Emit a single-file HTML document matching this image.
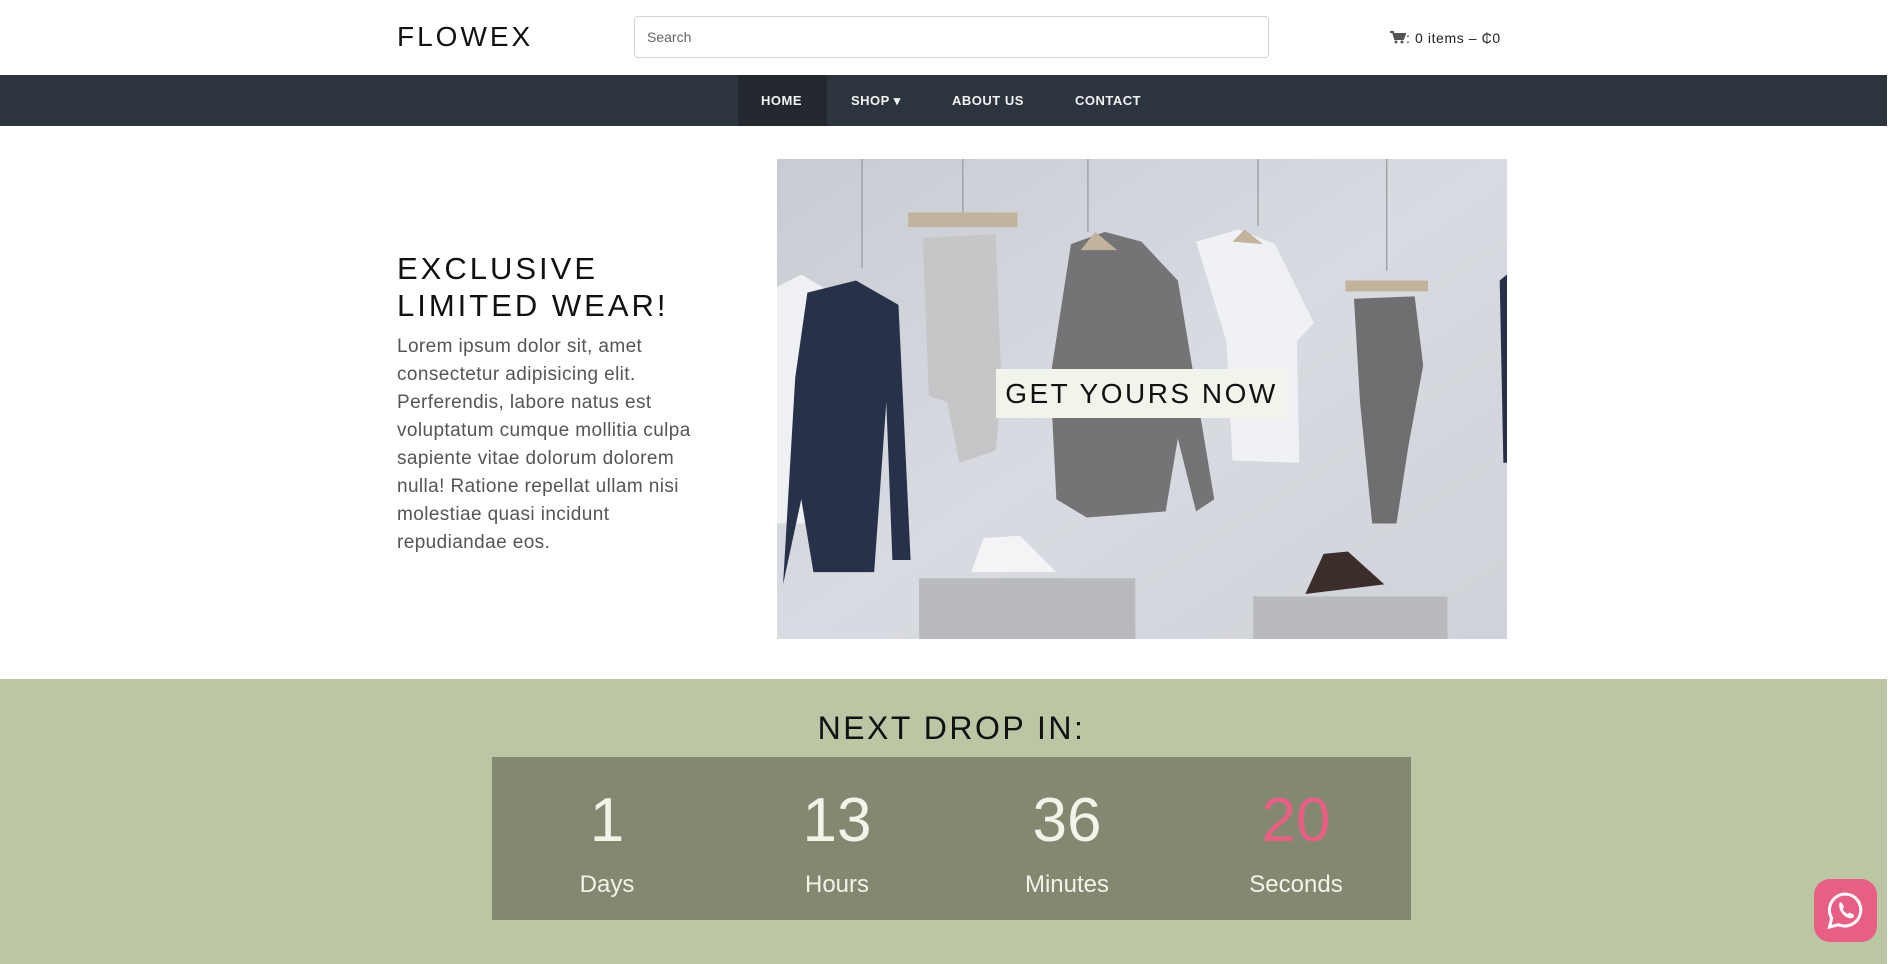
<!DOCTYPE html>
<html><head><meta charset="utf-8"><style>
*{box-sizing:border-box;margin:0;padding:0}
body{width:1904px;height:964px;overflow:hidden;background:#fff;font-family:"Liberation Sans",sans-serif;position:relative}
.page{width:1887px;position:absolute;left:0;top:0;height:964px}
.hdr{height:75px;position:relative}
.logo{position:absolute;left:397px;top:21px;font-size:28px;letter-spacing:3px;color:#111}
.search{position:absolute;left:634px;top:16px;width:635px;height:42px;border:1px solid #d4d4d4;border-radius:4px;font-size:14px;color:#666;padding:12px 12px}
.cart{position:absolute;left:1390px;top:30px;font-size:14px;color:#222;letter-spacing:.6px}
.nav{position:absolute;top:75px;left:0;width:1887px;height:51px;background:#2c353e}
.nav span{position:absolute;top:18px;color:#f2f2f2;font-size:13px;font-weight:bold;letter-spacing:.5px}
.home{position:absolute;left:738px;top:0;width:89px;height:51px;background:#22282e}
h1{position:absolute;left:397px;top:250px;font-weight:normal;font-size:31px;letter-spacing:3px;line-height:37px;color:#111}
.p{position:absolute;left:397px;top:333px;width:326px;font-size:19px;line-height:28px;color:#555;letter-spacing:.4px}
.img{position:absolute;left:777px;top:159px;width:730px;height:480px}
.btn{position:absolute;left:996px;top:369px;width:291px;height:49px;background:#f1f4ea;font-size:28px;letter-spacing:2.5px;color:#111;text-align:center;line-height:49px}
.green{position:absolute;top:679px;left:0;width:1887px;height:285px;background:#bac6a4}
.ndi{position:absolute;top:710px;left:8px;width:1887px;text-align:center;font-size:32px;letter-spacing:2.5px;color:#111}
.box{position:absolute;left:492px;top:757px;width:919px;height:163px;background:#828970}
.col{position:absolute;top:0;width:230px;text-align:center;color:#f3f3ea}
.num{position:absolute;top:28px;width:230px;font-size:62px}
.lab{position:absolute;top:114px;width:230px;font-size:24px}
.wa{position:absolute;left:1814px;top:879px;width:63px;height:63px;background:#e95f84;border-radius:16px}
</style></head><body><div class="page">
<div class="hdr">
<div class="logo">FLOWEX</div>
<div class="search">Search</div>
<div class="cart"><svg width="16" height="13" viewBox="0 0 16 13" style="vertical-align:-1px"><path d="M0 1h3l2 7h8l2-5H4" fill="none" stroke="#555" stroke-width="2"/><path d="M4 3h11l-2 5H5z" fill="#555"/><circle cx="6" cy="11" r="1.5" fill="#555"/><circle cx="12" cy="11" r="1.5" fill="#555"/></svg>: 0 items – ₵0</div>
</div>
<div class="nav"><div class="home"></div>
<span style="left:761px">HOME</span><span style="left:851px">SHOP ▾</span><span style="left:952px">ABOUT US</span><span style="left:1075px">CONTACT</span></div>
<h1>EXCLUSIVE<br>LIMITED WEAR!</h1>
<div class="p">Lorem ipsum dolor sit, amet consectetur adipisicing elit. Perferendis, labore natus est voluptatum cumque mollitia culpa sapiente vitae dolorum dolorem nulla! Ratione repellat ullam nisi molestiae quasi incidunt repudiandae eos.</div>
<svg class="img" viewBox="0 0 601 395" preserveAspectRatio="none">
<defs><linearGradient id="g" x1="0" y1="0" x2="1" y2="1"><stop offset="0" stop-color="#c9cbd3"/><stop offset=".5" stop-color="#d9dbe2"/><stop offset="1" stop-color="#d0d2d9"/></linearGradient></defs>
<rect width="601" height="395" fill="url(#g)"/>
<g stroke="#999" stroke-width="1"><line x1="70" y1="0" x2="70" y2="90"/><line x1="153" y1="0" x2="153" y2="45"/><line x1="256" y1="0" x2="256" y2="60"/><line x1="396" y1="0" x2="396" y2="55"/><line x1="502" y1="0" x2="502" y2="92"/></g>
<path d="M0 105 L20 95 L45 110 L45 300 L0 300Z" fill="#eef0f3"/>
<path d="M25 110 L65 100 L100 120 L110 330 L95 330 L90 200 L80 340 L30 340 L20 280 L5 350 L15 180Z" fill="#27324a"/>
<rect x="108" y="44" width="90" height="12" fill="#c2b39c"/>
<path d="M120 65 L180 62 L185 190 L180 240 L150 250 L140 200 L125 195Z" fill="#c6c6c8"/>
<path d="M242 70 L270 60 L300 68 L330 100 L360 280 L345 290 L330 230 L320 290 L255 295 L230 280 L225 180Z" fill="#747476"/>
<path d="M345 68 L380 58 L410 70 L442 135 L428 150 L430 250 L375 248 L370 150Z" fill="#eff1f5"/>
<path d="M262 60 L250 75 L280 75Z" fill="#c2b39c"/>
<path d="M385 58 L375 68 L400 70Z" fill="#c2b39c"/>
<rect x="468" y="100" width="68" height="9" fill="#c2b39c"/>
<path d="M475 115 L525 113 L532 170 L520 235 L510 300 L490 300 L480 200Z" fill="#6f6f71"/>
<path d="M595 100 L601 95 L601 250 L598 250Z" fill="#27324a"/>
<rect x="117" y="345" width="178" height="50" fill="#b9babe"/>
<rect x="392" y="360" width="160" height="35" fill="#b9babe"/>
<path d="M160 340 L170 312 L200 310 L230 340 Z" fill="#f4f4f6"/>
<path d="M435 358 L450 325 L470 323 L500 350 Z" fill="#3a2d2a"/>
</svg>
<div class="btn">GET YOURS NOW</div>
<div class="green"></div>
<div class="ndi">NEXT DROP IN:</div>
<div class="box">
<div class="col" style="left:0"><div class="num">1</div><div class="lab">Days</div></div>
<div class="col" style="left:230px"><div class="num">13</div><div class="lab">Hours</div></div>
<div class="col" style="left:460px"><div class="num">36</div><div class="lab">Minutes</div></div>
<div class="col" style="left:689px"><div class="num" style="color:#e95f84">20</div><div class="lab">Seconds</div></div>
</div>
<div class="wa"><svg width="63" height="63" viewBox="0 0 63 63"><path d="M31.5 15a16 16 0 0 0-13.8 24.2L15.5 48l9-2.3A16 16 0 1 0 31.5 15z" fill="none" stroke="#fff" stroke-width="3"/><path d="M25 24c1-1 2-1 3 0l2 4-1.5 2c1 2 3 4 5 5l2-1.5 4 2c1 1 0 3-1 3.5-6 2-15-7-13-15z" fill="#fff"/></svg></div>
</div></body></html>
